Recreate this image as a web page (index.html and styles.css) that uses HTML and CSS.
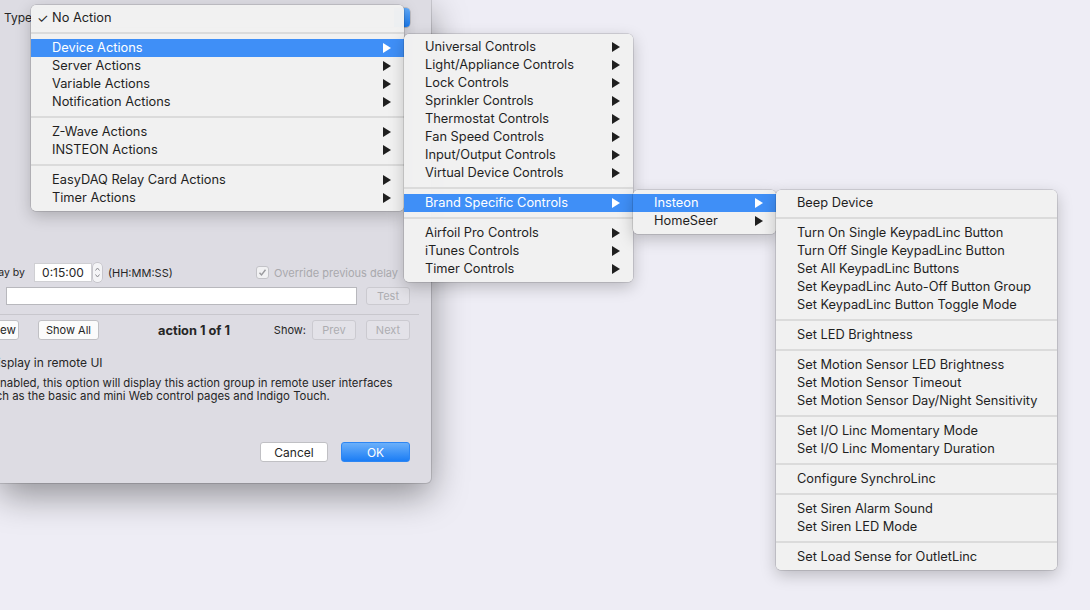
FILE: index.html
```html
<!DOCTYPE html>
<html lang="en">
<head>
    <meta charset="UTF-8">
    <title>Action Group</title>
    <link rel="stylesheet" href="styles.css">
</head>
<body>
    <div class="dialog">
        <div class="row row-type">
            <span>Type</span>
            <div class="popup"><span class="popup-cap"></span></div>
        </div>

        <div class="row row-delay">
            <span class="delay-label">Delay by</span>
            <div class="time-field">0:15:00</div>
            <div class="stepper">
                <svg width="9" height="19" viewBox="0 0 9 19"><path d="M2.5 7.5 L4.5 5 L6.5 7.5 M2.5 11.5 L4.5 14 L6.5 11.5" fill="none" stroke="#8d8d92" stroke-width="1"/></svg>
            </div>
            <span class="hint">(HH:MM:SS)</span>
            <div class="check disabled">
                <span class="box">
                    <svg width="11" height="11" viewBox="0 0 11 11"><path d="M2.5 5.8 L4.5 8 L8.5 2.8" fill="none" stroke="#9a9a9e" stroke-width="1.4"/></svg>
                </span>
                Override previous delay
            </div>
        </div>

        <div class="row row-script">
            <div class="text-field"></div>
            <button class="btn disabled btn-test">Test</button>
        </div>

        <div class="divider"></div>

        <div class="row row-nav">
            <button class="btn btn-new"><span>New</span></button>
            <button class="btn btn-showall">Show All</button>
            <span class="counter">action 1 of 1</span>
            <span class="show-label">Show:</span>
            <button class="btn disabled btn-nav">Prev</button>
            <button class="btn disabled btn-nav">Next</button>
        </div>

        <div class="row row-remote">
            <span class="box"></span>
            Display in remote UI
        </div>
        <p class="desc">If enabled, this option will display this action group in remote user interfaces<br>such as the basic and mini Web control pages and Indigo Touch.</p>

        <div class="row row-actions">
            <button class="btn btn-cancel">Cancel</button>
            <button class="btn btn-ok">OK</button>
        </div>
    </div>

    <!-- action type menu -->
    <div class="menu menu-type">
        <div class="item"><span class="tick">&#10003;</span><span class="text">No Action</span></div>
        <div class="sep"></div>
        <div class="item sub active"><span class="text">Device Actions</span></div>
        <div class="item sub"><span class="text">Server Actions</span></div>
        <div class="item sub"><span class="text">Variable Actions</span></div>
        <div class="item sub"><span class="text">Notification Actions</span></div>
        <div class="sep"></div>
        <div class="item sub"><span class="text">Z-Wave Actions</span></div>
        <div class="item sub"><span class="text">INSTEON Actions</span></div>
        <div class="sep"></div>
        <div class="item sub"><span class="text">EasyDAQ Relay Card Actions</span></div>
        <div class="item sub"><span class="text">Timer Actions</span></div>
    </div>

    <div class="menu menu-device">
        <div class="item sub"><span class="text">Universal Controls</span></div>
        <div class="item sub"><span class="text">Light/Appliance Controls</span></div>
        <div class="item sub"><span class="text">Lock Controls</span></div>
        <div class="item sub"><span class="text">Sprinkler Controls</span></div>
        <div class="item sub"><span class="text">Thermostat Controls</span></div>
        <div class="item sub"><span class="text">Fan Speed Controls</span></div>
        <div class="item sub"><span class="text">Input/Output Controls</span></div>
        <div class="item sub"><span class="text">Virtual Device Controls</span></div>
        <div class="sep"></div>
        <div class="item sub active"><span class="text">Brand Specific Controls</span></div>
        <div class="sep"></div>
        <div class="item sub"><span class="text">Airfoil Pro Controls</span></div>
        <div class="item sub"><span class="text">iTunes Controls</span></div>
        <div class="item sub"><span class="text">Timer Controls</span></div>
    </div>

    <div class="menu menu-brand">
        <div class="item sub active"><span class="text">Insteon</span></div>
        <div class="item sub"><span class="text">HomeSeer</span></div>
    </div>

    <div class="menu menu-insteon">
        <div class="item"><span class="text">Beep Device</span></div>
        <div class="sep"></div>
        <div class="item"><span class="text">Turn On Single KeypadLinc Button</span></div>
        <div class="item"><span class="text">Turn Off Single KeypadLinc Button</span></div>
        <div class="item"><span class="text">Set All KeypadLinc Buttons</span></div>
        <div class="item"><span class="text">Set KeypadLinc Auto-Off Button Group</span></div>
        <div class="item"><span class="text">Set KeypadLinc Button Toggle Mode</span></div>
        <div class="sep"></div>
        <div class="item"><span class="text">Set LED Brightness</span></div>
        <div class="sep"></div>
        <div class="item"><span class="text">Set Motion Sensor LED Brightness</span></div>
        <div class="item"><span class="text">Set Motion Sensor Timeout</span></div>
        <div class="item"><span class="text">Set Motion Sensor Day/Night Sensitivity</span></div>
        <div class="sep"></div>
        <div class="item"><span class="text">Set I/O Linc Momentary Mode</span></div>
        <div class="item"><span class="text">Set I/O Linc Momentary Duration</span></div>
        <div class="sep"></div>
        <div class="item"><span class="text">Configure SynchroLinc</span></div>
        <div class="sep"></div>
        <div class="item"><span class="text">Set Siren Alarm Sound</span></div>
        <div class="item"><span class="text">Set Siren LED Mode</span></div>
        <div class="sep"></div>
        <div class="item"><span class="text">Set Load Sense for OutletLinc</span></div>
    </div>
</body>
</html>
```

FILE: styles.css
```css
body {
    margin: 0;
    width: 1090px;
    height: 610px;
    position: relative;
    overflow: hidden;
    background-color: #eeedf5;
    font-family: Inter, "Noto Sans", sans-serif;
    color: #262626;
}

/* dialog window, top and left cut off by the screenshot */
.dialog {
    width: 431px;
    height: 483px;
    box-sizing: border-box;
    padding-right: 21px;
    display: flex;
    flex-direction: column;
    background-color: #dddce3;
    border-radius: 0 0 5px 0;
    box-shadow: 0 0 0 1px rgba(0, 0, 0, 0.12), 0 12px 36px rgba(0, 0, 0, 0.4);
    overflow: hidden;
    font-size: 11px;
}

.row {
    display: flex;
    align-items: center;
    flex-shrink: 0;
}

.row-type {
    margin-top: 8px;
    height: 19px;
    padding-left: 4px;
    font-size: 12px;
}
.popup {
    flex: 1;
    height: 19px;
    margin-left: 2px;
    display: flex;
    justify-content: flex-end;
    background: #fff;
    border-radius: 4px;
    box-shadow: 0 0 0 0.5px rgba(0, 0, 0, 0.25), 0 1px 1px rgba(0, 0, 0, 0.1);
}
.popup-cap {
    width: 16px;
    background: linear-gradient(#62abfa, #1c7ef5);
    border-radius: 0 4px 4px 0;
}

.row-delay {
    margin-top: 236px;
    height: 19px;
    margin-left: -35px;
}
.delay-label {
    width: 60px;
    text-align: right;
    margin-right: 9px;
    font-size: 10.5px;
}
.time-field {
    width: 58px;
    height: 19px;
    box-sizing: border-box;
    display: flex;
    align-items: center;
    justify-content: center;
    background: #fff;
    border: 1px solid #cfcfd3;
    font-size: 12px;
}
.stepper {
    width: 9px;
    height: 19px;
    margin-left: 1px;
    border-radius: 4px;
    background: #f4f4f6;
    box-shadow: 0 0 0 0.5px rgba(0, 0, 0, 0.2);
}
.stepper svg {
    display: block;
}
.hint {
    margin-left: 6px;
}
.check {
    margin-left: auto;
    margin-right: 12px;
    display: flex;
    align-items: center;
    gap: 5px;
}
.check.disabled {
    color: #a9a9ad;
}
.box {
    width: 11px;
    height: 11px;
    border: 1px solid #c3c3c8;
    border-radius: 3px;
    background: #f1f1f3;
}
.box svg {
    display: block;
}

.row-script {
    margin-top: 5px;
    height: 18px;
    padding-left: 6px;
}
.text-field {
    width: 351px;
    height: 18px;
    box-sizing: border-box;
    background: #fff;
    border: 1px solid #b8b8bd;
}

.btn {
    height: 20px;
    padding: 0;
    font-family: inherit;
    font-size: 11px;
    color: #262626;
    background: #fbfbfb;
    border: 1px solid #c0c0c4;
    border-radius: 3px;
}
.btn.disabled {
    color: #adadb1;
    background: #e3e2e8;
    border-color: #cbcad0;
}
.btn-test {
    width: 44px;
    height: 18px;
    margin-left: auto;
}

.divider {
    flex-shrink: 0;
    height: 1px;
    margin-top: 9px;
    margin-right: -9px;
    background: #c8c7cd;
}

.row-nav {
    margin-top: 5px;
    height: 20px;
    margin-left: -25px;
}
.btn-new {
    width: 44px;
    display: flex;
    align-items: center;
    justify-content: flex-end;
    padding-right: 2px;
    font-size: 11.5px;
}
.btn-showall {
    width: 61px;
    margin-left: 19px;
}
.counter {
    margin-left: 59px;
    font-size: 12.8px;
    font-weight: bold;
}
.show-label {
    margin-left: auto;
    margin-right: 6px;
}
.btn-nav {
    width: 44px;
}
.btn-nav + .btn-nav {
    margin-left: 10px;
}

.row-remote {
    margin-top: 15px;
    height: 14px;
    margin-left: -30px;
    gap: 6px;
    font-size: 12px;
}
.row-remote .box {
    background: #fff;
}
.desc {
    margin: 8px 0 0 -17px;
    font-size: 11.4px;
    line-height: 13px;
    white-space: nowrap;
}

.row-actions {
    margin-top: auto;
    margin-bottom: 21px;
    justify-content: flex-end;
    gap: 13px;
}
.btn-cancel {
    width: 68px;
    background: #fff;
    font-size: 12px;
}
.btn-ok {
    width: 69px;
    color: #fff;
    font-size: 12px;
    border-color: #2d86f3;
    background: linear-gradient(#6bb0fa, #1b7df5);
}

/* pop-up menus */
.menu {
    position: absolute;
    padding: 4px 0;
    background: rgba(241, 241, 241, 0.98);
    border-radius: 5px;
    box-shadow: 0 0 0 0.5px rgba(0, 0, 0, 0.22), 0 5px 16px rgba(0, 0, 0, 0.22);
    font-size: 12.8px;
    color: #1f1f1f;
}
.menu-type {
    left: 31px;
    top: 5px;
    width: 373px;
}
.menu-device {
    left: 404px;
    top: 34px;
    width: 229px;
}
.menu-brand {
    left: 633px;
    top: 190px;
    width: 143px;
}
.menu-insteon {
    left: 776px;
    top: 190px;
    width: 281px;
}

.item {
    height: 18px;
    display: flex;
    align-items: center;
    padding: 0 13px 0 21px;
    white-space: nowrap;
}
.item .text {
    flex: 1;
    margin-top: -1px;
}
.item.sub::after {
    content: "";
    width: 0;
    height: 0;
    border-top: 5px solid transparent;
    border-bottom: 5px solid transparent;
    border-left: 8px solid #1f1f1f;
}
.item.active {
    background: #3f8ff7;
    color: #fff;
}
.item.active::after {
    border-left-color: #fff;
}
.tick {
    width: 15px;
    margin-left: -15px;
    margin-top: -1px;
    font-size: 13px;
}
.sep {
    height: 2px;
    margin: 5px 0;
    background: #dbdbdb;
}
```
